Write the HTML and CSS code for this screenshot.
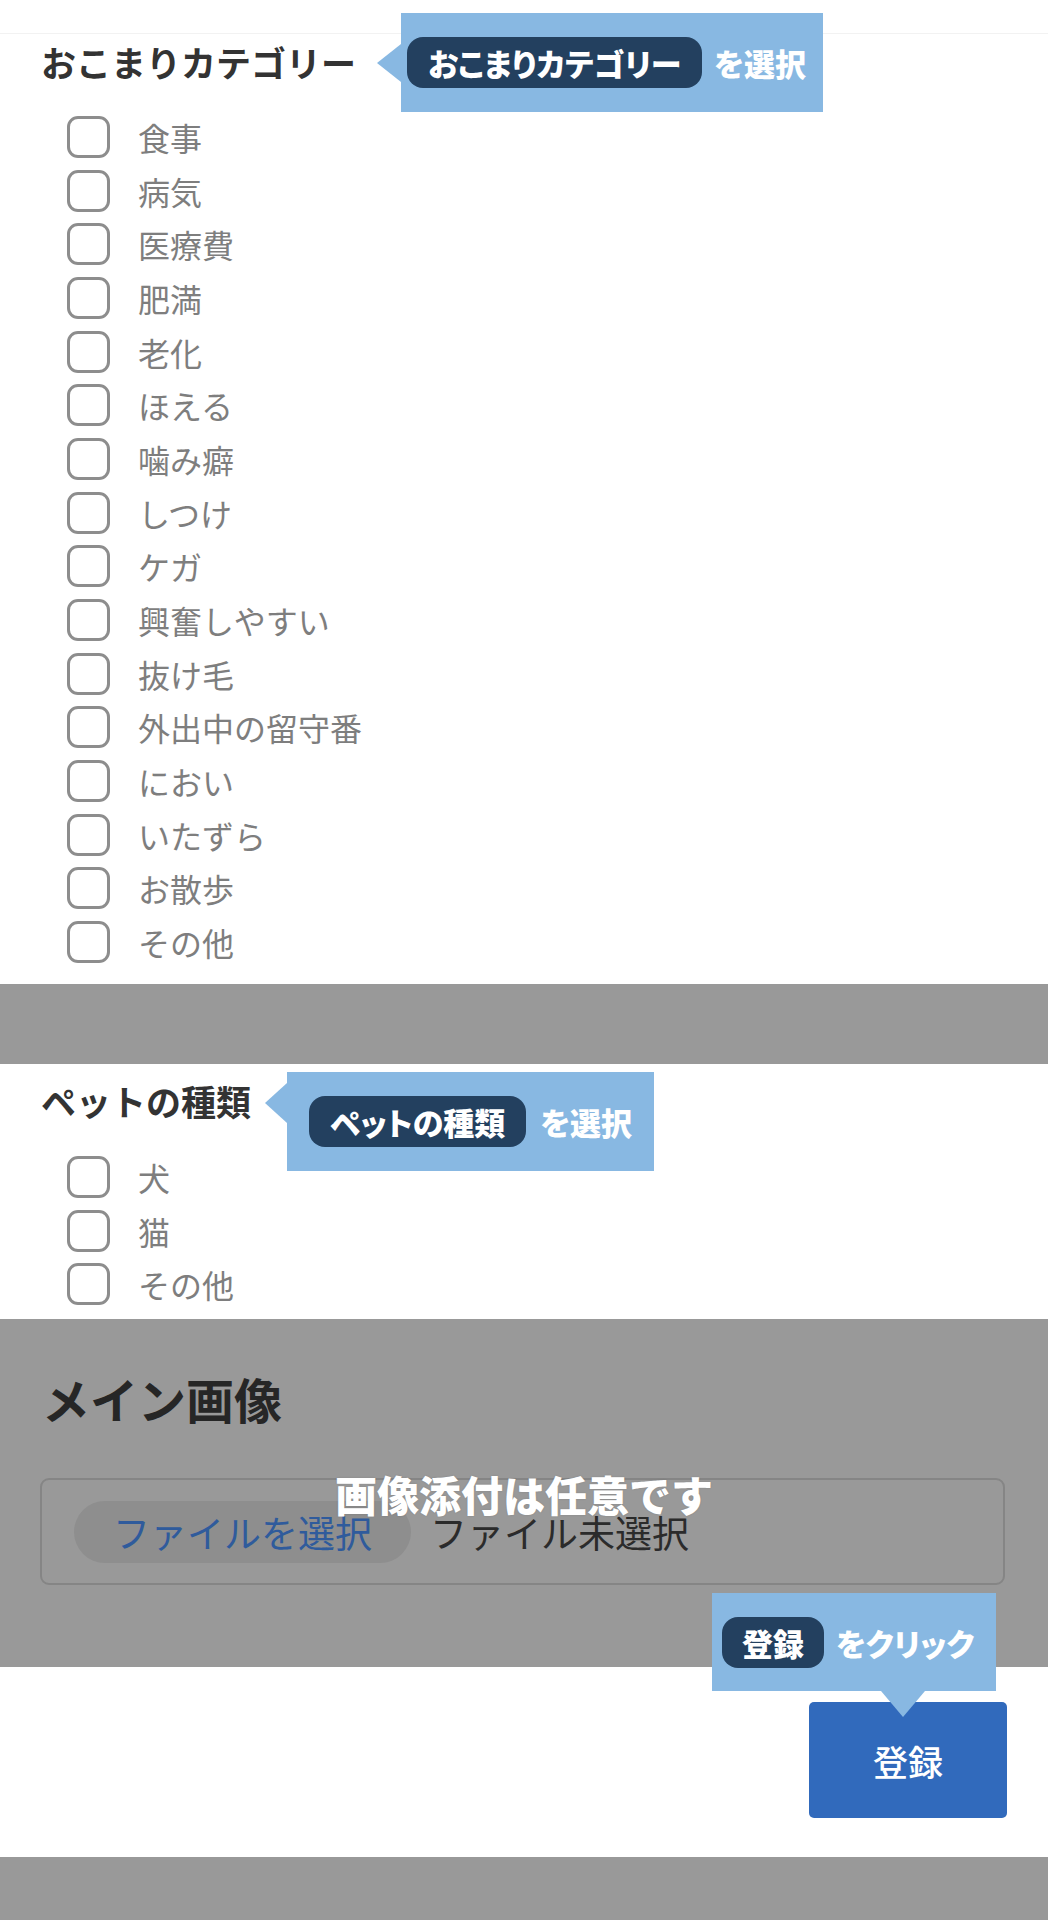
FILE: index.html
```html
<!DOCTYPE html>
<html lang="ja">
<head>
  <meta charset="UTF-8" />
  <meta name="viewport" content="width=device-width, initial-scale=1.0" />
  <title>おこまり登録</title>
  <link rel="stylesheet" href="styles.css">
</head>
<body>
  <div class="page">
    <div class="topbar"></div>

    <section class="group group-category">
      <h2 class="group-title">おこまりカテゴリー</h2>
      <ul class="options">
        <li><label class="option"><input type="checkbox"><span>食事</span></label></li>
        <li><label class="option"><input type="checkbox"><span>病気</span></label></li>
        <li><label class="option"><input type="checkbox"><span>医療費</span></label></li>
        <li><label class="option"><input type="checkbox"><span>肥満</span></label></li>
        <li><label class="option"><input type="checkbox"><span>老化</span></label></li>
        <li><label class="option"><input type="checkbox"><span>ほえる</span></label></li>
        <li><label class="option"><input type="checkbox"><span>噛み癖</span></label></li>
        <li><label class="option"><input type="checkbox"><span>しつけ</span></label></li>
        <li><label class="option"><input type="checkbox"><span>ケガ</span></label></li>
        <li><label class="option"><input type="checkbox"><span>興奮しやすい</span></label></li>
        <li><label class="option"><input type="checkbox"><span>抜け毛</span></label></li>
        <li><label class="option"><input type="checkbox"><span>外出中の留守番</span></label></li>
        <li><label class="option"><input type="checkbox"><span>におい</span></label></li>
        <li><label class="option"><input type="checkbox"><span>いたずら</span></label></li>
        <li><label class="option"><input type="checkbox"><span>お散歩</span></label></li>
        <li><label class="option"><input type="checkbox"><span>その他</span></label></li>
      </ul>
    </section>

    <div class="band"></div>

    <section class="group group-pet">
      <h2 class="group-title">ペットの種類</h2>
      <ul class="options">
        <li><label class="option"><input type="checkbox"><span>犬</span></label></li>
        <li><label class="option"><input type="checkbox"><span>猫</span></label></li>
        <li><label class="option"><input type="checkbox"><span>その他</span></label></li>
      </ul>
    </section>

    <section class="image-field">
      <h2 class="image-title">メイン画像</h2>
      <div class="file-box">
        <span class="file-button">ファイルを選択</span>
        <span class="file-name">ファイル未選択</span>
      </div>
      <p class="image-note">画像添付は任意です</p>
    </section>

    <div class="actions">
      <button class="submit">登録</button>
    </div>

    <div class="footer-band"></div>

    <!-- guide balloons -->
    <div class="tip tip-category">
      <span class="tip-key">おこまりカテゴリー</span>
      <span class="tip-text">を選択</span>
    </div>
    <div class="tip tip-pet">
      <span class="tip-key">ペットの種類</span>
      <span class="tip-text">を選択</span>
    </div>
    <div class="tip tip-submit">
      <span class="tip-key">登録</span>
      <span class="tip-text">をクリック</span>
    </div>
  </div>
</body>
</html>
```

FILE: styles.css
```css
body {
  margin: 0;
  background-color: #ffffff;
  font-family: "Noto Sans CJK JP", "Noto Sans", sans-serif;
}

.page {
  position: relative;
  width: 1048px;
}

.topbar {
  height: 33px;
  border-bottom: 1px solid #f2f2f2;
}

.group {
  padding: 0 41px;
  background-color: #ffffff;
}

.group-category {
  padding-top: 2px;
  padding-bottom: 15px;
}

.group-pet {
  padding-top: 11px;
  padding-bottom: 8px;
}

.group-title {
  margin: 0;
  font-size: 35px;
  line-height: 51px;
  font-weight: 700;
  color: #333333;
}

.options {
  list-style: none;
  margin: 23px 0 0;
  padding: 0 0 0 26px;
}

.group-pet .options {
  margin-top: 24px;
}

.options li {
  height: 53.7px;
  display: flex;
  align-items: center;
}

.option {
  display: flex;
  align-items: center;
}

.option input {
  appearance: none;
  -webkit-appearance: none;
  box-sizing: border-box;
  width: 43px;
  height: 42px;
  margin: 0;
  border: 3px solid #8d8d8d;
  border-radius: 11px;
  background-color: #ffffff;
}

.option span {
  margin-left: 28px;
  font-size: 32px;
  line-height: 42px;
  color: #7e7e7e;
}

.band {
  height: 80px;
  background-color: #999999;
}

.image-field {
  position: relative;
  padding: 44px 43px 82px 40px;
  background-color: #999999;
}

.image-title {
  margin: 0 0 45px 2px;
  font-size: 48px;
  line-height: 70px;
  font-weight: 700;
  color: #262626;
}

.file-box {
  box-sizing: border-box;
  height: 107px;
  display: flex;
  align-items: center;
  padding-left: 32px;
  border: 2px solid #858585;
  border-radius: 9px;
}

.file-button {
  height: 62px;
  padding: 0 39px;
  display: flex;
  align-items: center;
  border-radius: 31px;
  background-color: #8e8e8e;
  font-size: 37px;
  color: #2f5b9c;
}

.file-name {
  margin-left: 19px;
  font-size: 37px;
  color: #2b2b2b;
}

.image-note {
  position: absolute;
  left: 0;
  right: 0;
  top: 154px;
  margin: 0;
  text-align: center;
  font-size: 42px;
  line-height: 42px;
  font-weight: 900;
  color: #ffffff;
  text-shadow: 0 0 2px rgba(0, 0, 0, 0.15);
}

.actions {
  display: flex;
  justify-content: flex-end;
  padding: 35px 41px 39px;
}

.submit {
  width: 198px;
  height: 116px;
  border: none;
  border-radius: 5px;
  background-color: #316abc;
  color: #ffffff;
  font-family: "Noto Sans CJK JP", sans-serif;
  font-size: 35px;
  font-weight: 500;
}

.footer-band {
  height: 80px;
  background-color: #999999;
}

/* guide balloons */
.tip {
  position: absolute;
  box-sizing: border-box;
  display: flex;
  align-items: center;
  background-color: #88b8e2;
  font-weight: 900;
  font-size: 31px;
  font-feature-settings: "palt";
  color: #ffffff;
}

.tip::before {
  content: "";
  position: absolute;
  width: 0;
  height: 0;
}

.tip-key {
  height: 51px;
  display: flex;
  align-items: center;
  padding: 0 21px;
  border-radius: 16px;
  background-color: #23405f;
}

.tip-text {
  margin-left: 12px;
}

.tip-category {
  left: 401px;
  top: 13px;
  width: 422px;
  height: 99px;
  padding-left: 6px;
}

.tip-category::before {
  left: -24px;
  top: 31px;
  border-top: 19px solid transparent;
  border-bottom: 19px solid transparent;
  border-right: 24px solid #88b8e2;
}

.tip-pet {
  left: 287px;
  top: 1072px;
  width: 367px;
  height: 99px;
  padding-left: 22px;
}

.tip-pet::before {
  left: -22px;
  top: 11px;
  border-top: 20px solid transparent;
  border-bottom: 20px solid transparent;
  border-right: 22px solid #88b8e2;
}

.tip-pet .tip-text {
  margin-left: 14px;
}

.tip-submit {
  left: 712px;
  top: 1593px;
  width: 284px;
  height: 98px;
  padding-left: 10px;
}

.tip-submit .tip-key {
  padding: 0 20px;
}

.tip-submit::before {
  left: 169px;
  top: 98px;
  border-left: 22px solid transparent;
  border-right: 22px solid transparent;
  border-top: 26px solid #88b8e2;
}
```
